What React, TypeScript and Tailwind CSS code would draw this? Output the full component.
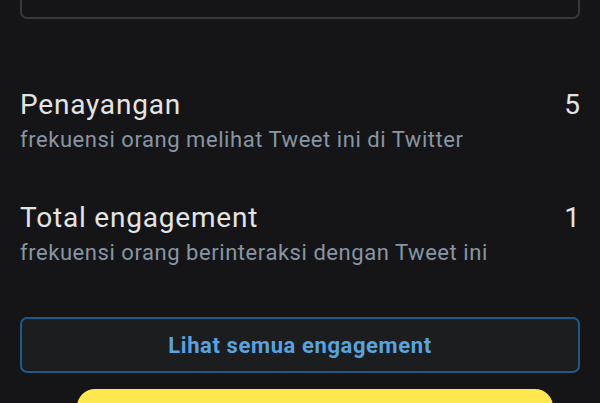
import React from 'react'

const STATS = [
  { title: 'Penayangan', desc: 'frekuensi orang melihat Tweet ini di Twitter', value: '5' },
  { title: 'Total engagement', desc: 'frekuensi orang berinteraksi dengan Tweet ini', value: '1' },
]

export default function App() {
  return (
    <div className="h-[403px] w-[600px] overflow-hidden bg-[#151517] px-5 font-['Roboto',sans-serif]">
      <div className="h-[19px] rounded-b-[7px] border-2 border-t-0 border-[#38383b]" />

      <div className="mt-[70px] flex flex-col gap-[49px]">
        {STATS.map((s) => (
          <div key={s.title} className="flex items-start justify-between">
            <div className="flex flex-col">
              <span className="text-[28px] leading-[32px] tracking-[0.8px] text-[#e4e4e4]">{s.title}</span>
              <span className="mt-[6px] text-[22px] leading-[26px] tracking-[0.55px] text-[#8796a5]">{s.desc}</span>
            </div>
            <span className="text-[28px] leading-[32px] text-[#e4e4e4]">{s.value}</span>
          </div>
        ))}
      </div>

      <button className="mt-[51px] flex h-[56px] w-full items-center justify-center rounded-[7px] border-2 border-[#1d5a8a] bg-[#1c1d1f] text-[22px] font-bold tracking-[0.6px] text-[#5aa2de]">
        Lihat semua engagement
      </button>

      <div className="ml-[57px] mt-[16px] h-[60px] w-[476px] rounded-[18px] bg-[#ffe84f]" />
    </div>
  )
}
